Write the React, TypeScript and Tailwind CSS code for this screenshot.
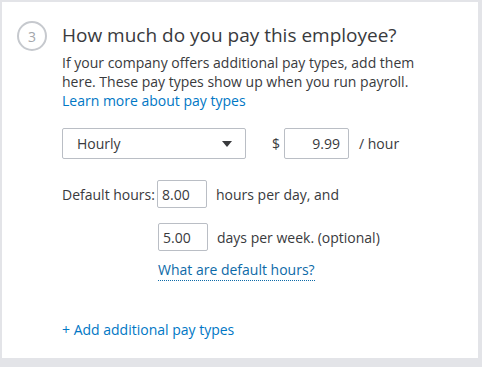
const font = { fontFamily: '"Open Sans", "Liberation Sans", sans-serif' };

export default function App() {
  return (
    <div className="w-[482px] h-[367px] bg-[#e3e4e8] pl-[2px] pt-[2px] pr-[4px] pb-[9px]" style={font}>
      <div className="h-full bg-white flex pt-[18px] pl-[15px] text-[#393a3d]">
        <div className="mt-[1px] w-[30px] h-[30px] shrink-0 rounded-full border-2 border-[#c6c9ce] flex items-center justify-center text-[14px] text-[#a3a6ab]">
          3
        </div>
        <div className="ml-[15px] flex flex-col">
          <h2 className="text-[19px] leading-[30px]">How much do you pay this employee?</h2>
          <p className="mt-[3px] text-[14px] leading-[19px] w-[370px]">
            If your company offers additional pay types, add them here. These pay types show up when you run payroll.
          </p>
          <a className="text-[14px] leading-[19px] text-[#0077c5]">Learn more about pay types</a>

          <div className="mt-[18px] flex items-center text-[14px]">
            <div className="w-[184px] h-[31px] border border-[#babec5] rounded-[2px] flex items-center justify-between pl-[14px] pr-[13px]">
              <span>Hourly</span>
              <svg width="10" height="6" viewBox="0 0 10 6"><path d="M0 0h10L5 6z" fill="#393a3d" /></svg>
            </div>
            <span className="ml-[26px]">$</span>
            <div className="ml-[4px] w-[65px] h-[31px] border border-[#babec5] rounded-[2px] flex items-center justify-end pr-[8px]">9.99</div>
            <span className="ml-[10px]">/ hour</span>
          </div>

          <div className="mt-[21px] flex items-center text-[14px]">
            <span className="w-[95px]">Default hours:</span>
            <div className="w-[50px] h-[28px] border border-[#babec5] rounded-[2px] flex items-center pl-[4px]">8.00</div>
            <span className="ml-[9px]">hours per day, and</span>
          </div>
          <div className="mt-[15px] ml-[96px] flex items-center text-[14px]">
            <div className="w-[50px] h-[28px] border border-[#babec5] rounded-[2px] flex items-center pl-[4px]">5.00</div>
            <span className="ml-[9px]">days per week. (optional)</span>
          </div>
          <div className="mt-[9px] ml-[96px] text-[14px] leading-[19px]">
            <span className="text-[#0d6aa8] border-b border-dotted border-[#0d6aa8] pb-[1px]">What are default hours?</span>
          </div>

          <a className="mt-[40px] text-[14px] text-[#0077c5]">+ Add additional pay types</a>
        </div>
      </div>
    </div>
  );
}
